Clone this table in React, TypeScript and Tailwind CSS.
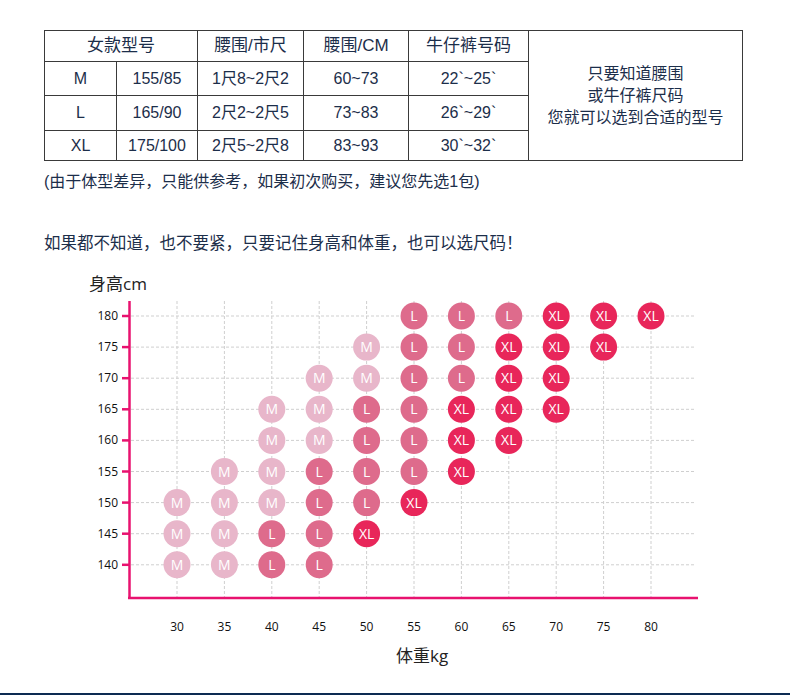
import React from "react";

type Size = "M" | "L" | "XL";

const rows = [
  { size: "M", spec: "155/85", shi: "1尺8~2尺2", cm: "60~73", jeans: "22`~25`", h: "h-[34px]" },
  { size: "L", spec: "165/90", shi: "2尺2~2尺5", cm: "73~83", jeans: "26`~29`", h: "h-[35px]" },
  { size: "XL", spec: "175/100", shi: "2尺5~2尺8", cm: "83~93", jeans: "30`~32`", h: "h-[30px]" },
];

// height -> list of [weight, size]
const chart: [number, [number, Size][]][] = [
  [180, [[55, "L"], [60, "L"], [65, "L"], [70, "XL"], [75, "XL"], [80, "XL"]]],
  [175, [[50, "M"], [55, "L"], [60, "L"], [65, "XL"], [70, "XL"], [75, "XL"]]],
  [170, [[45, "M"], [50, "M"], [55, "L"], [60, "L"], [65, "XL"], [70, "XL"]]],
  [165, [[40, "M"], [45, "M"], [50, "L"], [55, "L"], [60, "XL"], [65, "XL"], [70, "XL"]]],
  [160, [[40, "M"], [45, "M"], [50, "L"], [55, "L"], [60, "XL"], [65, "XL"]]],
  [155, [[35, "M"], [40, "M"], [45, "L"], [50, "L"], [55, "L"], [60, "XL"]]],
  [150, [[30, "M"], [35, "M"], [40, "M"], [45, "L"], [50, "L"], [55, "XL"]]],
  [145, [[30, "M"], [35, "M"], [40, "L"], [45, "L"], [50, "XL"]]],
  [140, [[30, "M"], [35, "M"], [40, "L"], [45, "L"]]],
];

const fills: Record<Size, string> = {
  M: "#e8b6ca",
  L: "#de6b8c",
  XL: "#e8265a",
};

const heights = [180, 175, 170, 165, 160, 155, 150, 145, 140];
const weights = [30, 35, 40, 45, 50, 55, 60, 65, 70, 75, 80];

const yOf = (h: number) => 315 + ((180 - h) / 5) * 31.1;
const xOf = (w: number) => 177 + ((w - 30) / 5) * 47.4;

const cell = "border border-[#3a3a3a] text-center font-normal";

const SizeChart: React.FC = () => {
  return (
    <svg width={790} height={420} viewBox="0 265 790 420" className="block">
      <g fontFamily="'Open Sans', 'Noto Sans CJK SC', sans-serif">
        {/* grid */}
        {heights.map((h) => (
          <line
            key={"gh" + h}
            x1={131}
            x2={695}
            y1={yOf(h)}
            y2={yOf(h)}
            stroke="#cfcfcf"
            strokeWidth={1}
            strokeDasharray="3 2"
          />
        ))}
        {weights.map((w) => (
          <line
            key={"gv" + w}
            x1={xOf(w)}
            x2={xOf(w)}
            y1={300}
            y2={596}
            stroke="#cfcfcf"
            strokeWidth={1}
            strokeDasharray="3 2"
          />
        ))}

        {/* axes */}
        <line x1={129.5} x2={129.5} y1={300} y2={598} stroke="#e8126f" strokeWidth={2.5} />
        <line x1={128} x2={698} y1={597} y2={597} stroke="#e8126f" strokeWidth={2.5} />
        {heights.map((h) => (
          <g key={"t" + h}>
            <line x1={122} x2={129} y1={yOf(h)} y2={yOf(h)} stroke="#e8126f" strokeWidth={2.5} />
            <text x={118} y={yOf(h) + 4} textAnchor="end" fontSize={12} fill="#111">
              {h}
            </text>
          </g>
        ))}
        {weights.map((w) => (
          <text key={"x" + w} x={xOf(w)} y={630} textAnchor="middle" fontSize={12} fill="#111">
            {w}
          </text>
        ))}

        <text x={89} y={289} fontSize={17} fill="#222">
          身高cm
        </text>
        <text x={396} y={661} fontSize={17} fill="#222">
          体重kg
        </text>

        {/* dots */}
        {chart.map(([h, items]) =>
          items.map(([w, s]) => (
            <g key={h + "-" + w}>
              <circle cx={xOf(w)} cy={yOf(h)} r={13.5} fill={fills[s]} />
              <text
                x={xOf(w)}
                y={yOf(h) + 5}
                textAnchor="middle"
                fontSize={14}
                fill="#fff"
              >
                {s}
              </text>
            </g>
          ))
        )}
      </g>
    </svg>
  );
};

export default function App() {
  return (
    <div className="w-[790px] h-[695px] bg-white flex flex-col overflow-hidden font-['Liberation_Sans','Noto_Sans_CJK_SC',sans-serif] text-[#1c2e4a]">
      <div className="px-[44px] pt-[30px]">
        <table className="border-collapse w-[698px] table-fixed text-[16px]">
          <colgroup>
            <col className="w-[72px]" />
            <col className="w-[81px]" />
            <col className="w-[106px]" />
            <col className="w-[105px]" />
            <col className="w-[120px]" />
            <col className="w-[214px]" />
          </colgroup>
          <tbody>
            <tr className="h-[31px] text-[17px]">
              <td colSpan={2} className={cell}>女款型号</td>
              <td className={cell}>腰围/市尺</td>
              <td className={cell}>腰围/CM</td>
              <td className={cell}>牛仔裤号码</td>
              <td rowSpan={4} className={cell + " text-[16px] leading-[22px]"}>
                <div>只要知道腰围</div>
                <div>或牛仔裤尺码</div>
                <div>您就可以选到合适的型号</div>
              </td>
            </tr>
            {rows.map((r) => (
              <tr key={r.size} className={r.h}>
                <td className={cell}>{r.size}</td>
                <td className={cell}>{r.spec}</td>
                <td className={cell}>{r.shi}</td>
                <td className={cell}>{r.cm}</td>
                <td className={cell}>{r.jeans}</td>
              </tr>
            ))}
          </tbody>
        </table>
        <p className="mt-[11px] text-[16px] leading-[20px]">
          (由于体型差异，只能供参考，如果初次购买，建议您先选1包)
        </p>
        <p className="mt-[39px] text-[16.5px] leading-[24px]">
          如果都不知道，也不要紧，只要记住身高和体重，也可以选尺码！
        </p>
      </div>
      <div className="mt-[11px]">
        <SizeChart />
      </div>
      <div className="mt-auto h-[2px] bg-[#0d2b52]" />
    </div>
  );
}
